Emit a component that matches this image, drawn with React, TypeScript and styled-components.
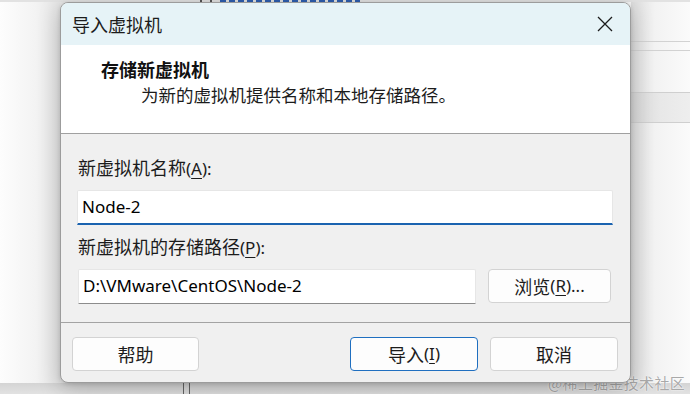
import * as React from 'react';
import styled, { createGlobalStyle } from 'styled-components';

const CJK = `"Noto Sans CJK SC", "Noto Sans", sans-serif`;
const LATIN = `"Noto Sans", "Noto Sans CJK SC", sans-serif`;

const Global = createGlobalStyle`
  html, body {
    margin: 0;
    padding: 0;
    background: #f6f6f6;
  }
`;

const Screen = styled.div`
  position: relative;
  width: 690px;
  height: 394px;
  overflow: hidden;
  display: flex;
  flex-direction: column;
  background: linear-gradient(90deg, #fbfbfb 0%, #eeeeee 8%, #e6e6e6 9%, #f4f4f4 90%, #fbfbfb 100%);
  font-family: ${CJK};
`;

const TopStrip = styled.div`
  height: 2px;
  display: flex;
  overflow: hidden;
  background: #e2e2e2;
`;

const TopGap = styled.div`
  width: 200px;
`;

const TopTick = styled.div`
  width: 2px;
  background: #555;
  margin-right: 8px;
`;

// bottoms of the cut-off blue link text behind the dialog
const TopLink = styled.div`
  width: 140px;
  background: repeating-linear-gradient(90deg, #2f5fb0 0 6px, transparent 6px 9px);
`;

const MainRow = styled.div`
  display: flex;
  height: 381px;
`;

const LeftGutter = styled.div`
  width: 60px;
  background: linear-gradient(90deg, #fdfdfd 0%, #f3f3f3 60%, #e4e4e4 100%);
`;

const RightGutter = styled.div`
  flex: 1;
  display: flex;
  flex-direction: column;
  background: linear-gradient(90deg, #dcdcdc 0%, #f2f2f2 40%, #fbfbfb 100%);
`;

const GutterLine = styled.div<{ $top: number }>`
  margin-top: ${p => p.$top}px;
  height: 1px;
  background: #d2d2d2;
`;

const GutterBand = styled.div`
  margin-top: 41px;
  height: 29px;
  border-top: 1px solid #cfcfcf;
  border-bottom: 1px solid #cfcfcf;
  background: linear-gradient(90deg, #d6d6d6 0%, #e8e8e8 50%, #eeeeee 100%);
`;

const BottomStrip = styled.div`
  height: 11px;
  display: flex;
  background: linear-gradient(180deg, #d4d4d4 0%, #e2e2e2 100%);
`;

const BottomGap = styled.div`
  width: 183px;
`;

const BottomRail = styled.div`
  width: 5px;
  border-left: 1px solid #666;
  border-right: 1px solid #666;
`;

const Dialog = styled.div`
  position: relative;
  z-index: 1;
  width: 571px;
  height: 381px;
  box-sizing: border-box;
  border: 1px solid #9c9c9c;
  border-radius: 8px;
  overflow: hidden;
  display: flex;
  flex-direction: column;
  background: #f0f0f0;
  box-shadow: 0 6px 22px rgba(0, 0, 0, 0.22), 0 1px 4px rgba(0, 0, 0, 0.12);
`;

const TitleBar = styled.div`
  height: 42px;
  display: flex;
  align-items: center;
  justify-content: space-between;
  padding: 0 16px 0 11px;
  background: #e6f3f7;
`;

const Title = styled.div`
  font-size: 18px;
  color: #1c1c1c;
  line-height: 22px;
`;

const CloseBtn = styled.div`
  width: 16px;
  height: 16px;
  display: flex;
  margin-right: 1px;
`;

const Header = styled.div`
  height: 89px;
  box-sizing: border-box;
  background: #ffffff;
  border-bottom: 1px solid #a0a0a0;
  padding: 13px 0 0 40px;
  display: flex;
  flex-direction: column;
`;

const Heading = styled.div`
  font-size: 18px;
  font-weight: 700;
  line-height: 22px;
  color: #111;
`;

const SubTitle = styled.div`
  font-size: 17.5px;
  line-height: 22px;
  color: #1c1c1c;
  margin: 4px 0 0 40px;
`;

const Body = styled.div`
  display: flex;
  flex-direction: column;
  padding: 22px 17px 0 16px;
  height: 189px;
  box-sizing: border-box;
  border-bottom: 1px solid #a3a3a3;
`;

const Label = styled.div<{ $gap: number }>`
  font-size: 18px;
  line-height: 22px;
  color: #1c1c1c;
  margin-top: ${p => p.$gap}px;
  padding-left: 1px;
`;

const Key = styled.span`
  font-family: ${LATIN};
  font-size: 17px;
  u {
    text-underline-offset: 3px;
    text-decoration-thickness: 1px;
  }
`;

const Field = styled.div<{ $focus?: boolean }>`
  height: 35px;
  box-sizing: border-box;
  background: #fff;
  border: 1px solid #e6e6e6;
  border-bottom: ${p => (p.$focus ? '2px solid #1a63b0' : '1px solid #8c8c8c')};
  border-radius: 2px 2px 0 0;
  display: flex;
  align-items: center;
  padding: 0 0 ${p => (p.$focus ? 1 : 2)}px 4px;
  font: 17px ${LATIN};
  color: #000;
`;

const NameField = styled(Field)`
  margin-top: 10px;
`;

const PathRow = styled.div`
  display: flex;
  gap: 12px;
  margin-top: 10px;
  padding-left: 1px;
`;

const PathField = styled(Field)`
  width: 398px;
`;

const Button = styled.div<{ $primary?: boolean; $w: number }>`
  width: ${p => p.$w}px;
  height: 34px;
  box-sizing: border-box;
  display: flex;
  align-items: center;
  justify-content: center;
  background: #fdfdfd;
  border: 1px solid ${p => (p.$primary ? '#1f6fc0' : '#d3d3d3')};
  border-radius: 4px;
  font-size: 18px;
  color: #1c1c1c;
  line-height: 22px;
`;

const Footer = styled.div`
  flex: 1;
  display: flex;
  align-items: flex-start;
  padding: 14px 12px 0 11px;
`;

const FooterSpacer = styled.div`
  flex: 1;
`;

const FooterRight = styled.div`
  display: flex;
  gap: 12px;
`;

const Watermark = styled.div`
  position: absolute;
  right: 5px;
  bottom: 2px;
  font-size: 15px;
  line-height: 18px;
  color: #a9a9a9;
  letter-spacing: 0.3px;
  text-shadow: 0 0 2px #fff, 0 0 1px #fff;
`;

const CloseIcon = () => (
  <svg width="16" height="16" viewBox="0 0 16 16">
    <path d="M1 1 L15 15 M15 1 L1 15" stroke="#1c1c1c" strokeWidth="1.3" fill="none" />
  </svg>
);

export default function App() {
  return (
    <>
      <Global />
      <Screen>
        <TopStrip>
          <TopGap />
          <TopTick />
          <TopTick />
          <TopLink />
        </TopStrip>
        <MainRow>
          <LeftGutter />
          <Dialog>
            <TitleBar>
              <Title>导入虚拟机</Title>
              <CloseBtn>
                <CloseIcon />
              </CloseBtn>
            </TitleBar>
            <Header>
              <Heading>存储新虚拟机</Heading>
              <SubTitle>为新的虚拟机提供名称和本地存储路径。</SubTitle>
            </Header>
            <Body>
              <Label $gap={0}>
                新虚拟机名称<Key>(<u>A</u>):</Key>
              </Label>
              <NameField $focus>Node-2</NameField>
              <Label $gap={10}>
                新虚拟机的存储路径<Key>(<u>P</u>):</Key>
              </Label>
              <PathRow>
                <PathField>D:\VMware\CentOS\Node-2</PathField>
                <Button $w={123}>
                  浏览<Key>(<u>R</u>)...</Key>
                </Button>
              </PathRow>
            </Body>
            <Footer>
              <Button $w={127}>帮助</Button>
              <FooterSpacer />
              <FooterRight>
                <Button $w={128} $primary>
                  导入<Key>(<u>I</u>)</Key>
                </Button>
                <Button $w={128}>取消</Button>
              </FooterRight>
            </Footer>
          </Dialog>
          <RightGutter>
            <GutterLine $top={39} />
            <GutterLine $top={8} />
            <GutterBand />
          </RightGutter>
        </MainRow>
        <BottomStrip>
          <BottomGap />
          <BottomRail />
        </BottomStrip>
        <Watermark>@稀土掘金技术社区</Watermark>
      </Screen>
    </>
  );
}
